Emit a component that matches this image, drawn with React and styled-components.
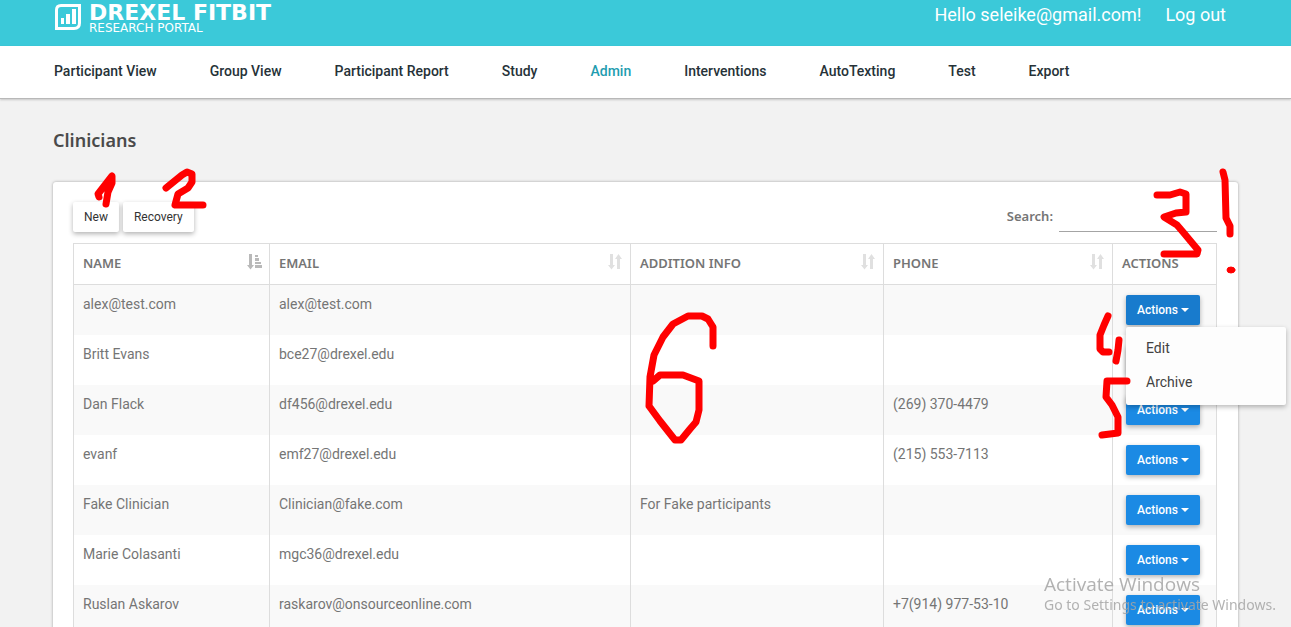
import React from "react";
import styled, { createGlobalStyle } from "styled-components";

const GlobalStyle = createGlobalStyle`
  * { box-sizing: border-box; }
  html { background: #f2f2f2; scrollbar-width: none; overflow-x: hidden; }
  body { margin: 0; font-family: Roboto, "Liberation Sans", sans-serif; font-size: 14px; color: #757575; }
`;

const headingFont = `"Noto Sans", "Open Sans", sans-serif`;

const Page = styled.div`
  position: relative;
`;

const Header = styled.header`
  display: flex;
  justify-content: space-between;
  align-items: flex-start;
  height: 46px;
  padding: 3px 65px 0 54px;
  background: #3bc9d9;
  color: #fff;
`;

const Brand = styled.a`
  display: flex;
  gap: 7px;
  color: #fff;
  text-decoration: none;
  font-family: "DejaVu Sans", sans-serif;
`;

const BrandText = styled.span`
  display: flex;
  flex-direction: column;
`;

const BrandName = styled.span`
  font-size: 22px;
  font-weight: 700;
  line-height: 19px;
`;

const BrandSub = styled.span`
  font-size: 12px;
  line-height: 12px;
`;

const Account = styled.div`
  display: flex;
  gap: 24px;
  font-size: 18px;
  line-height: 24px;
`;

const AccountLink = styled.a`
  color: #fff;
  text-decoration: none;
`;

const Nav = styled.nav`
  display: flex;
  gap: 53px;
  height: 53px;
  padding: 0 54px;
  background: #fff;
  border-bottom: 1px solid #b8b8b8;
  box-shadow: 0 1px 2px rgba(0, 0, 0, 0.18);
`;

const NavLink = styled.a`
  color: ${(p) => (p.$active ? "#1f9db0" : "#263238")};
  font-size: 14px;
  font-weight: 500;
  line-height: 50px;
  text-decoration: none;
  white-space: nowrap;
`;

const Main = styled.main`
  padding: 27px 53px;
`;

const Title = styled.h1`
  margin: 0 0 28px;
  font-family: ${headingFont};
  font-size: 18px;
  font-weight: 600;
  line-height: 28px;
  color: #4a4a4a;
`;

const Card = styled.section`
  padding: 20px 21px 20px 20px;
  background: #fff;
  border-radius: 3px;
  box-shadow: 0 0 3px rgba(0, 0, 0, 0.35);
`;

const Toolbar = styled.div`
  display: flex;
  align-items: flex-start;
  gap: 4px;
  height: 41px;
`;

const PlainButton = styled.button`
  height: 30px;
  padding: 0 11px;
  border: 0;
  border-radius: 2px;
  background: #fff;
  color: #333;
  font: 12px/30px Roboto, sans-serif;
  box-shadow: 0 2px 5px rgba(0, 0, 0, 0.3);
`;

const Search = styled.label`
  display: flex;
  gap: 6px;
  margin-left: auto;
  font-family: ${headingFont};
  font-size: 13px;
  font-weight: 600;
  line-height: 29px;
`;

const SearchInput = styled.input`
  width: 158px;
  height: 30px;
  padding: 0;
  border: 0;
  border-bottom: 1px solid #a4a4a4;
  background: transparent;
  font: 14px Roboto, sans-serif;
  outline: none;
`;

const Table = styled.table`
  width: 100%;
  table-layout: fixed;
  border-collapse: collapse;
`;

const HeadCell = styled.th`
  width: ${(p) => p.$width || "auto"};
  height: 41px;
  padding: 0 7px 2px 9px;
  border: 1px solid #ddd;
  font-family: ${headingFont};
  font-size: 13px;
  font-weight: 600;
  line-height: 18px;
  text-align: left;
  text-transform: uppercase;
`;

const HeadContent = styled.div`
  display: flex;
  align-items: flex-start;
  justify-content: space-between;
`;

const Row = styled.tr`
  background: ${(p) => (p.$odd ? "#f9f9f9" : "#fff")};
`;

const Cell = styled.td`
  height: 50px;
  padding: 9px;
  border-left: 1px solid #ddd;
  border-right: 1px solid #ddd;
  line-height: 20px;
  vertical-align: top;
`;

const ActionCell = styled(Cell)`
  padding: 10px 13px;
`;

const Dropdown = styled.div`
  position: relative;
`;

const ActionButton = styled.button`
  display: flex;
  align-items: center;
  justify-content: center;
  gap: 3px;
  width: 74px;
  height: 30px;
  padding: 0;
  border: 0;
  border-radius: 2px;
  background: ${(p) => (p.$open ? "#187bcd" : "#1b8ae4")};
  color: #fff;
  font: 500 12px/30px Roboto, sans-serif;
  box-shadow: 0 2px 5px rgba(0, 0, 0, 0.3);
`;

const Caret = styled.span`
  border: 4px solid transparent;
  border-top-color: currentColor;
  border-bottom: 0;
`;

const Menu = styled.ul`
  position: absolute;
  top: 32px;
  left: 0;
  z-index: 2;
  width: 160px;
  margin: 0;
  padding: 4px 0 6px;
  list-style: none;
  background: #fdfdfd;
  border-radius: 2px;
  box-shadow: 0 2px 5px rgba(0, 0, 0, 0.28);
`;

const MenuItem = styled.a`
  display: block;
  padding: 0 20px;
  color: #424242;
  line-height: 34px;
  text-decoration: none;
`;

const Ink = styled.svg`
  position: absolute;
  top: 0;
  left: 0;
  z-index: 3;
  overflow: visible;
  pointer-events: none;
`;

const Watermark = styled.aside`
  position: fixed;
  right: 11px;
  bottom: 12px;
  z-index: 4;
  width: 236px;
  color: rgba(165, 165, 165, 0.85);
  white-space: nowrap;
  pointer-events: none;
`;

const WatermarkTitle = styled.div`
  font-family: "Open Sans", sans-serif;
  font-size: 19px;
  line-height: 22px;
`;

const WatermarkText = styled.div`
  font-family: "Noto Sans", sans-serif;
  font-size: 14px;
  line-height: 20px;
`;

const LogoMark = () => (
  <svg width="28" height="27" viewBox="0 0 28 27" aria-hidden="true">
    <path d="M7 2.500H25.500V20Q25.500 25.500 20 25.500H2.500V7Q2.500 2.500 7 2.500Z" fill="none" stroke="#fff" strokeWidth="3" />
    <path d="M7 15h3v6H7zM12 11h4v10h-4zM18 6h4v15h-4z" fill="#fff" />
  </svg>
);

const SortIcon = ({ sorted }) => (
  <svg width="15" height="16" viewBox="0 0 15 16" fill={sorted ? "#b9b9b9" : "#e0e0e0"} aria-hidden="true">
    <path d="M2 0h3v11h2l-3.500 4.500L0 11h2z" />
    {sorted ? (
      <path d="M8 1h3v2H8zM8 4h4v3H8zM8 8h6v2H8zM8 11h7v3H8z" />
    ) : (
      <path d="M9 15h3V5h2L10.500 0 7 5h2z" />
    )}
  </svg>
);

const navItems = ["Participant View", "Group View", "Participant Report", "Study", "Admin", "Interventions", "AutoTexting", "Test", "Export"];

const columns = [
  { label: "Name", width: "196px", sorted: true },
  { label: "Email" },
  { label: "Addition info", width: "253px" },
  { label: "Phone", width: "229px" },
];

const clinicians = [
  ["alex@test.com", "alex@test.com", "", ""],
  ["Britt Evans", "bce27@drexel.edu", "", ""],
  ["Dan Flack", "df456@drexel.edu", "", "(269) 370-4479"],
  ["evanf", "emf27@drexel.edu", "", "(215) 553-7113"],
  ["Fake Clinician", "Clinician@fake.com", "For Fake participants", ""],
  ["Marie Colasanti", "mgc36@drexel.edu", "", ""],
  ["Ruslan Askarov", "raskarov@onsourceonline.com", "", "+7(914) 977-53-10"],
];

const inkStrokes = [
  { width: 7, d: "M99 197L98 194L112 176L112 183L108 192L106 204" },
  { width: 7, d: "M166 188L182 175L187 172L192 174V182L188 188L178 194L175 205L203 205" },
  { width: 7, d: "M1157 195L1170 195L1180 192L1186 194V212L1176 213L1164 217L1177 225L1183 232L1198 250L1197 254H1164" },
  { width: 7, d: "M1223 172L1225 180L1226 218L1230 226L1230 234" },
  { width: 7, d: "M1108 316L1104 325L1100 335V349L1103 352H1109" },
  { width: 7, d: "M1119 340L1118 350L1116 361" },
  { width: 7, d: "M1127 381H1107L1106 397L1112 405L1118 417V433L1102 435" },
  { width: 7, d: "M713 346V327L708 319L702 316H688L673 324L663 337L654 355L650 377L649 406L660 421L675 440H681L690 429L696 422L699 410V381L683 375H660L653 381" },
];

export default function App() {
  return (
    <Page>
      <GlobalStyle />
      <Header>
        <Brand href="#">
          <LogoMark />
          <BrandText>
            <BrandName>DREXEL FITBIT</BrandName>
            <BrandSub>RESEARCH PORTAL</BrandSub>
          </BrandText>
        </Brand>
        <Account>
          <AccountLink href="#">Hello seleike@gmail.com!</AccountLink>
          <AccountLink href="#">Log out</AccountLink>
        </Account>
      </Header>
      <Nav>
        {navItems.map((item) => (
          <NavLink key={item} href="#" $active={item === "Admin"}>{item}</NavLink>
        ))}
      </Nav>
      <Main>
        <Title>Clinicians</Title>
        <Card>
          <Toolbar>
            <PlainButton>New</PlainButton>
            <PlainButton>Recovery</PlainButton>
            <Search>
              Search:
              <SearchInput type="search" />
            </Search>
          </Toolbar>
          <Table>
            <thead>
              <tr>
                {columns.map((c) => (
                  <HeadCell key={c.label} $width={c.width}>
                    <HeadContent>
                      {c.label}
                      <SortIcon sorted={c.sorted} />
                    </HeadContent>
                  </HeadCell>
                ))}
                <HeadCell $width="104px">Actions</HeadCell>
              </tr>
            </thead>
            <tbody>
              {clinicians.map((row, i) => (
                <Row key={row[0]} $odd={i % 2 === 0}>
                  {row.map((text, j) => (
                    <Cell key={j}>{text}</Cell>
                  ))}
                  <ActionCell>
                    <Dropdown>
                      <ActionButton $open={i === 0} aria-expanded={i === 0}>
                        Actions
                        <Caret />
                      </ActionButton>
                      {i === 0 && (
                        <Menu>
                          <li><MenuItem href="#">Edit</MenuItem></li>
                          <li><MenuItem href="#">Archive</MenuItem></li>
                        </Menu>
                      )}
                    </Dropdown>
                  </ActionCell>
                </Row>
              ))}
            </tbody>
          </Table>
        </Card>
      </Main>
      <Ink width="1" height="1" fill="none" stroke="#f00" strokeLinecap="round" strokeLinejoin="round" aria-hidden="true">
        {inkStrokes.map((s) => (
          <path key={s.d} d={s.d} strokeWidth={s.width} />
        ))}
        <ellipse cx="1231" cy="270" rx="4" ry="3" fill="#f00" strokeWidth="1" />
      </Ink>
      <Watermark>
        <WatermarkTitle>Activate Windows</WatermarkTitle>
        <WatermarkText>Go to Settings to activate Windows.</WatermarkText>
      </Watermark>
    </Page>
  );
}
